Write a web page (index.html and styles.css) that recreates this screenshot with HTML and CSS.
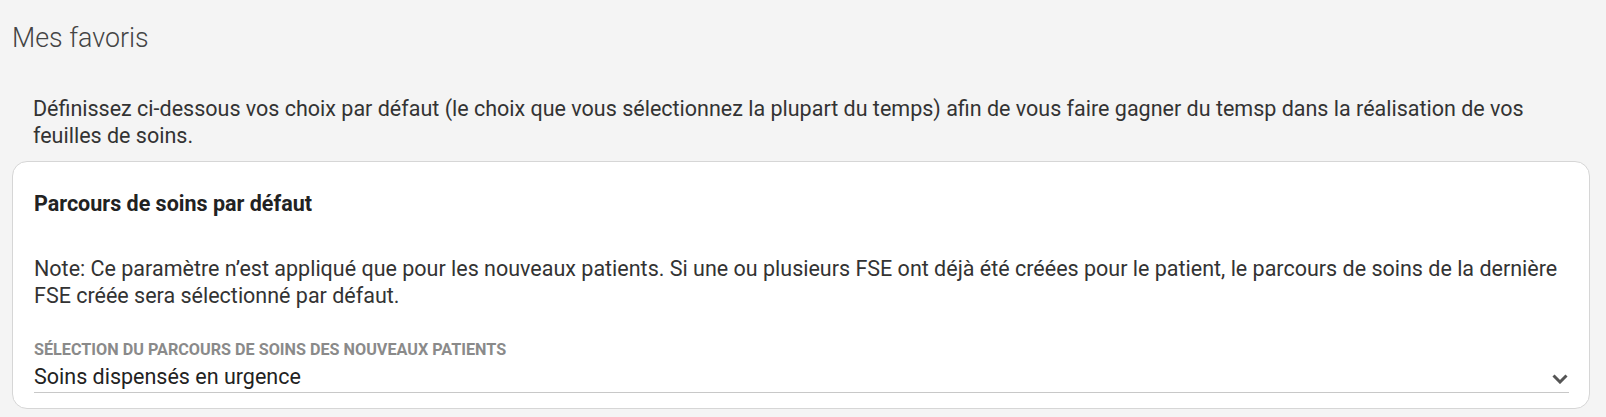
FILE: index.html
```html
<!DOCTYPE html>
<html lang="fr">
<head>
<meta charset="utf-8">
<title>Mes favoris</title>
<link rel="stylesheet" href="styles.css">
</head>
<body>
<div class="page">
  <h1 class="page-title">Mes favoris</h1>
  <p class="intro">Définissez ci-dessous vos choix par défaut (le choix que vous sélectionnez la plupart du temps) afin de vous faire gagner du temsp dans la réalisation de vos feuilles de soins.</p>
  <section class="card">
    <h2 class="card-title">Parcours de soins par défaut</h2>
    <p class="note">Note: Ce paramètre n’est appliqué que pour les nouveaux patients. Si une ou plusieurs FSE ont déjà été créées pour le patient, le parcours de soins de la dernière FSE créée sera sélectionné par défaut.</p>
    <div class="field">
      <label class="field-label">Sélection du parcours de soins des nouveaux patients</label>
      <div class="select">
        <span class="select-value">Soins dispensés en urgence</span>
        <svg class="chevron" width="16" height="10" viewBox="0 0 16 10"><path d="M1.5 1.5 L8 8 L14.5 1.5" fill="none" stroke="#555" stroke-width="3"/></svg>
      </div>
    </div>
  </section>
</div>
</body>
</html>
```
FILE: styles.css
```css
html, body {
  margin: 0;
  padding: 0;
  background: #f4f4f4;
}
body {
  font-family: Roboto, "Liberation Sans", Arial, sans-serif;
  color: #333;
}
.page {
  padding: 22px 16px 0 12px;
}
.page-title {
  margin: 0;
  font-size: 26.8px;
  line-height: 32px;
  font-weight: 300;
  color: #444;
}
.intro {
  margin: 42px 0 0 0;
  padding: 0 21px;
  font-size: 21.5px;
  line-height: 26.7px;
  color: #333;
}
.card {
  margin-top: 12px;
  background: #fff;
  border: 1px solid #d6d6d6;
  border-radius: 15px;
  padding: 29px 20px 15px 21px;
}
.card-title {
  margin: 0;
  font-size: 21.5px;
  line-height: 26.7px;
  font-weight: 700;
  color: #222;
}
.note {
  margin: 37.7px 0 0 0;
  font-size: 21.5px;
  line-height: 26.7px;
  color: #333;
}
.field {
  margin-top: 32px;
  display: flex;
  flex-direction: column;
}
.field-label {
  font-size: 16.2px;
  line-height: 18px;
  font-weight: 700;
  text-transform: uppercase;
  color: #8a8a8a;
}
.select {
  display: flex;
  align-items: center;
  justify-content: space-between;
  border-bottom: 1px solid #c8c8c8;
  padding: 5px 0 2px 0;
}
.select-value {
  font-size: 21.5px;
  line-height: 26px;
  color: #222;
}
.chevron {
  margin-right: 1px;
  margin-top: 4px;
}
```
